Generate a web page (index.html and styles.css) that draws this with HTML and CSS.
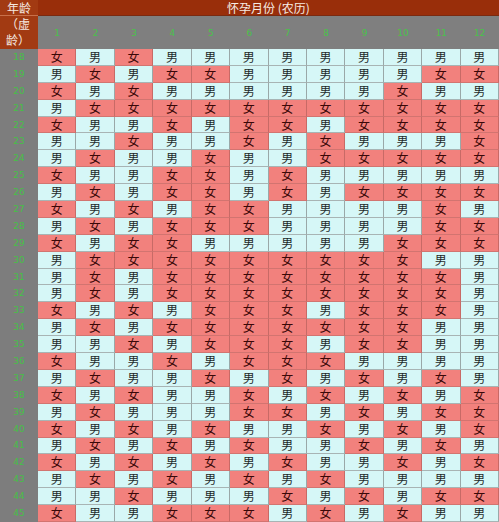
FILE: index.html
```html
<!DOCTYPE html>
<html lang="zh">
<head>
<meta charset="utf-8">
<title>清宫图</title>
<link rel="stylesheet" href="styles.css">
</head>
<body>
<div class="chart">
  <div class="corner top">年龄</div>
  <div class="title">怀孕月份 (农历)</div>
  <div class="corner sub"><span class="ln">（虚</span><span class="ln">龄）</span></div>
  <div class="months">
    <span>1</span><span>2</span><span>3</span><span>4</span><span>5</span><span>6</span><span>7</span><span>8</span><span>9</span><span>10</span><span>11</span><span>12</span>
  </div>

  <div class="age">18</div><div class="c f">女</div><div class="c m">男</div><div class="c f">女</div><div class="c m">男</div><div class="c m">男</div><div class="c m">男</div><div class="c m">男</div><div class="c m">男</div><div class="c m">男</div><div class="c m">男</div><div class="c m">男</div><div class="c m">男</div>
  <div class="age">19</div><div class="c m">男</div><div class="c f">女</div><div class="c m">男</div><div class="c f">女</div><div class="c f">女</div><div class="c m">男</div><div class="c m">男</div><div class="c m">男</div><div class="c m">男</div><div class="c m">男</div><div class="c f">女</div><div class="c f">女</div>
  <div class="age">20</div><div class="c f">女</div><div class="c m">男</div><div class="c f">女</div><div class="c m">男</div><div class="c m">男</div><div class="c m">男</div><div class="c m">男</div><div class="c m">男</div><div class="c m">男</div><div class="c f">女</div><div class="c m">男</div><div class="c m">男</div>
  <div class="age">21</div><div class="c m">男</div><div class="c f">女</div><div class="c f">女</div><div class="c f">女</div><div class="c f">女</div><div class="c f">女</div><div class="c f">女</div><div class="c f">女</div><div class="c f">女</div><div class="c f">女</div><div class="c f">女</div><div class="c f">女</div>
  <div class="age">22</div><div class="c f">女</div><div class="c m">男</div><div class="c m">男</div><div class="c f">女</div><div class="c m">男</div><div class="c f">女</div><div class="c f">女</div><div class="c m">男</div><div class="c f">女</div><div class="c f">女</div><div class="c f">女</div><div class="c f">女</div>
  <div class="age">23</div><div class="c m">男</div><div class="c m">男</div><div class="c f">女</div><div class="c m">男</div><div class="c m">男</div><div class="c f">女</div><div class="c m">男</div><div class="c f">女</div><div class="c m">男</div><div class="c m">男</div><div class="c m">男</div><div class="c f">女</div>
  <div class="age">24</div><div class="c m">男</div><div class="c f">女</div><div class="c m">男</div><div class="c m">男</div><div class="c f">女</div><div class="c m">男</div><div class="c m">男</div><div class="c f">女</div><div class="c f">女</div><div class="c f">女</div><div class="c f">女</div><div class="c f">女</div>
  <div class="age">25</div><div class="c f">女</div><div class="c m">男</div><div class="c m">男</div><div class="c f">女</div><div class="c f">女</div><div class="c m">男</div><div class="c f">女</div><div class="c m">男</div><div class="c m">男</div><div class="c m">男</div><div class="c m">男</div><div class="c m">男</div>
  <div class="age">26</div><div class="c m">男</div><div class="c f">女</div><div class="c m">男</div><div class="c f">女</div><div class="c f">女</div><div class="c m">男</div><div class="c f">女</div><div class="c m">男</div><div class="c f">女</div><div class="c f">女</div><div class="c f">女</div><div class="c f">女</div>
  <div class="age">27</div><div class="c f">女</div><div class="c m">男</div><div class="c f">女</div><div class="c m">男</div><div class="c f">女</div><div class="c f">女</div><div class="c m">男</div><div class="c m">男</div><div class="c m">男</div><div class="c m">男</div><div class="c f">女</div><div class="c m">男</div>
  <div class="age">28</div><div class="c m">男</div><div class="c f">女</div><div class="c m">男</div><div class="c f">女</div><div class="c f">女</div><div class="c f">女</div><div class="c m">男</div><div class="c m">男</div><div class="c m">男</div><div class="c m">男</div><div class="c f">女</div><div class="c f">女</div>
  <div class="age">29</div><div class="c f">女</div><div class="c m">男</div><div class="c f">女</div><div class="c f">女</div><div class="c m">男</div><div class="c m">男</div><div class="c m">男</div><div class="c m">男</div><div class="c m">男</div><div class="c f">女</div><div class="c f">女</div><div class="c f">女</div>
  <div class="age">30</div><div class="c m">男</div><div class="c f">女</div><div class="c f">女</div><div class="c f">女</div><div class="c f">女</div><div class="c f">女</div><div class="c f">女</div><div class="c f">女</div><div class="c f">女</div><div class="c f">女</div><div class="c m">男</div><div class="c m">男</div>
  <div class="age">31</div><div class="c m">男</div><div class="c f">女</div><div class="c m">男</div><div class="c f">女</div><div class="c f">女</div><div class="c f">女</div><div class="c f">女</div><div class="c f">女</div><div class="c f">女</div><div class="c f">女</div><div class="c f">女</div><div class="c m">男</div>
  <div class="age">32</div><div class="c m">男</div><div class="c f">女</div><div class="c m">男</div><div class="c f">女</div><div class="c f">女</div><div class="c f">女</div><div class="c f">女</div><div class="c f">女</div><div class="c f">女</div><div class="c f">女</div><div class="c f">女</div><div class="c m">男</div>
  <div class="age">33</div><div class="c f">女</div><div class="c m">男</div><div class="c f">女</div><div class="c m">男</div><div class="c f">女</div><div class="c f">女</div><div class="c f">女</div><div class="c m">男</div><div class="c f">女</div><div class="c f">女</div><div class="c f">女</div><div class="c m">男</div>
  <div class="age">34</div><div class="c m">男</div><div class="c f">女</div><div class="c m">男</div><div class="c f">女</div><div class="c f">女</div><div class="c f">女</div><div class="c f">女</div><div class="c f">女</div><div class="c f">女</div><div class="c f">女</div><div class="c m">男</div><div class="c m">男</div>
  <div class="age">35</div><div class="c m">男</div><div class="c m">男</div><div class="c f">女</div><div class="c m">男</div><div class="c f">女</div><div class="c f">女</div><div class="c f">女</div><div class="c m">男</div><div class="c f">女</div><div class="c f">女</div><div class="c m">男</div><div class="c m">男</div>
  <div class="age">36</div><div class="c f">女</div><div class="c m">男</div><div class="c m">男</div><div class="c f">女</div><div class="c m">男</div><div class="c f">女</div><div class="c f">女</div><div class="c f">女</div><div class="c m">男</div><div class="c m">男</div><div class="c m">男</div><div class="c m">男</div>
  <div class="age">37</div><div class="c m">男</div><div class="c f">女</div><div class="c m">男</div><div class="c m">男</div><div class="c f">女</div><div class="c m">男</div><div class="c f">女</div><div class="c m">男</div><div class="c f">女</div><div class="c m">男</div><div class="c f">女</div><div class="c m">男</div>
  <div class="age">38</div><div class="c f">女</div><div class="c m">男</div><div class="c f">女</div><div class="c m">男</div><div class="c m">男</div><div class="c f">女</div><div class="c m">男</div><div class="c f">女</div><div class="c m">男</div><div class="c f">女</div><div class="c m">男</div><div class="c f">女</div>
  <div class="age">39</div><div class="c m">男</div><div class="c f">女</div><div class="c m">男</div><div class="c m">男</div><div class="c m">男</div><div class="c f">女</div><div class="c f">女</div><div class="c m">男</div><div class="c f">女</div><div class="c m">男</div><div class="c f">女</div><div class="c f">女</div>
  <div class="age">40</div><div class="c f">女</div><div class="c m">男</div><div class="c f">女</div><div class="c m">男</div><div class="c f">女</div><div class="c m">男</div><div class="c m">男</div><div class="c f">女</div><div class="c m">男</div><div class="c f">女</div><div class="c m">男</div><div class="c f">女</div>
  <div class="age">41</div><div class="c m">男</div><div class="c f">女</div><div class="c m">男</div><div class="c f">女</div><div class="c m">男</div><div class="c f">女</div><div class="c m">男</div><div class="c m">男</div><div class="c f">女</div><div class="c m">男</div><div class="c f">女</div><div class="c m">男</div>
  <div class="age">42</div><div class="c f">女</div><div class="c m">男</div><div class="c f">女</div><div class="c m">男</div><div class="c f">女</div><div class="c m">男</div><div class="c f">女</div><div class="c m">男</div><div class="c m">男</div><div class="c f">女</div><div class="c m">男</div><div class="c f">女</div>
  <div class="age">43</div><div class="c m">男</div><div class="c f">女</div><div class="c m">男</div><div class="c f">女</div><div class="c m">男</div><div class="c f">女</div><div class="c m">男</div><div class="c f">女</div><div class="c m">男</div><div class="c m">男</div><div class="c m">男</div><div class="c m">男</div>
  <div class="age">44</div><div class="c m">男</div><div class="c m">男</div><div class="c f">女</div><div class="c m">男</div><div class="c m">男</div><div class="c m">男</div><div class="c f">女</div><div class="c m">男</div><div class="c f">女</div><div class="c m">男</div><div class="c f">女</div><div class="c f">女</div>
  <div class="age">45</div><div class="c f">女</div><div class="c m">男</div><div class="c m">男</div><div class="c f">女</div><div class="c f">女</div><div class="c f">女</div><div class="c m">男</div><div class="c f">女</div><div class="c m">男</div><div class="c f">女</div><div class="c m">男</div><div class="c m">男</div>
</div>
</body>
</html>
```

FILE: styles.css
```css
html, body {
  margin: 0;
  padding: 0;
  background: #808080;
}

.chart {
  width: 499px;
  height: 522px;
  overflow: hidden;
  display: grid;
  grid-template-columns: 38px repeat(12, minmax(0, 1fr));
  grid-template-rows: 16px 33px repeat(28, minmax(0, 1fr));
  font-family: "Noto Sans CJK SC", "Noto Sans", sans-serif;
  background: #808080;
}

.chart > * {
  min-height: 0;
  min-width: 0;
  overflow: hidden;
}

.corner {
  background: #a23a12;
  color: #f4e8e0;
  font-size: 12px;
  display: flex;
  align-items: center;
  justify-content: center;
  text-align: center;
}

.corner.top {
  border-bottom: 1px solid #c8704a;
  line-height: 1;
  box-sizing: border-box;
}

.corner.sub {
  flex-direction: column;
  gap: 3px;
  padding-right: 2px;
  box-sizing: border-box;
}

.corner.sub .ln {
  display: block;
  line-height: 12px;
  height: 13px;
}

.title {
  grid-column: 2 / span 12;
  background: #992e0a;
  color: #f6ece4;
  font-size: 12px;
  line-height: 1;
  display: flex;
  align-items: center;
  justify-content: center;
  border-bottom: 1px solid #7a2a10;
  box-sizing: border-box;
}

.months {
  grid-column: 2 / span 12;
  display: grid;
  grid-template-columns: repeat(12, minmax(0, 1fr));
  align-items: center;
  background: #7f7f7f;
  color: #49c24a;
  font-family: "DejaVu Sans", sans-serif;
  font-size: 9px;
  line-height: 1;
  text-align: center;
  padding-top: 2px;
}

.age {
  background: #7d7d7d;
  color: #46c046;
  font-family: "DejaVu Sans", sans-serif;
  font-size: 9px;
  line-height: 1;
  display: flex;
  align-items: center;
  justify-content: center;
}

.c {
  display: flex;
  align-items: center;
  justify-content: center;
  font-size: 12px;
  line-height: 1;
  border-right: 1px solid #9aa8a8;
  border-bottom: 1px solid #a8b4b4;
  box-sizing: border-box;
}

.c.m {
  background: #d6f7f7;
  color: #1e2a2a;
}

.c.f {
  background: #f2817d;
  color: #3a0808;
  border-right-color: #c86a66;
  border-bottom-color: #d27470;
}
```
